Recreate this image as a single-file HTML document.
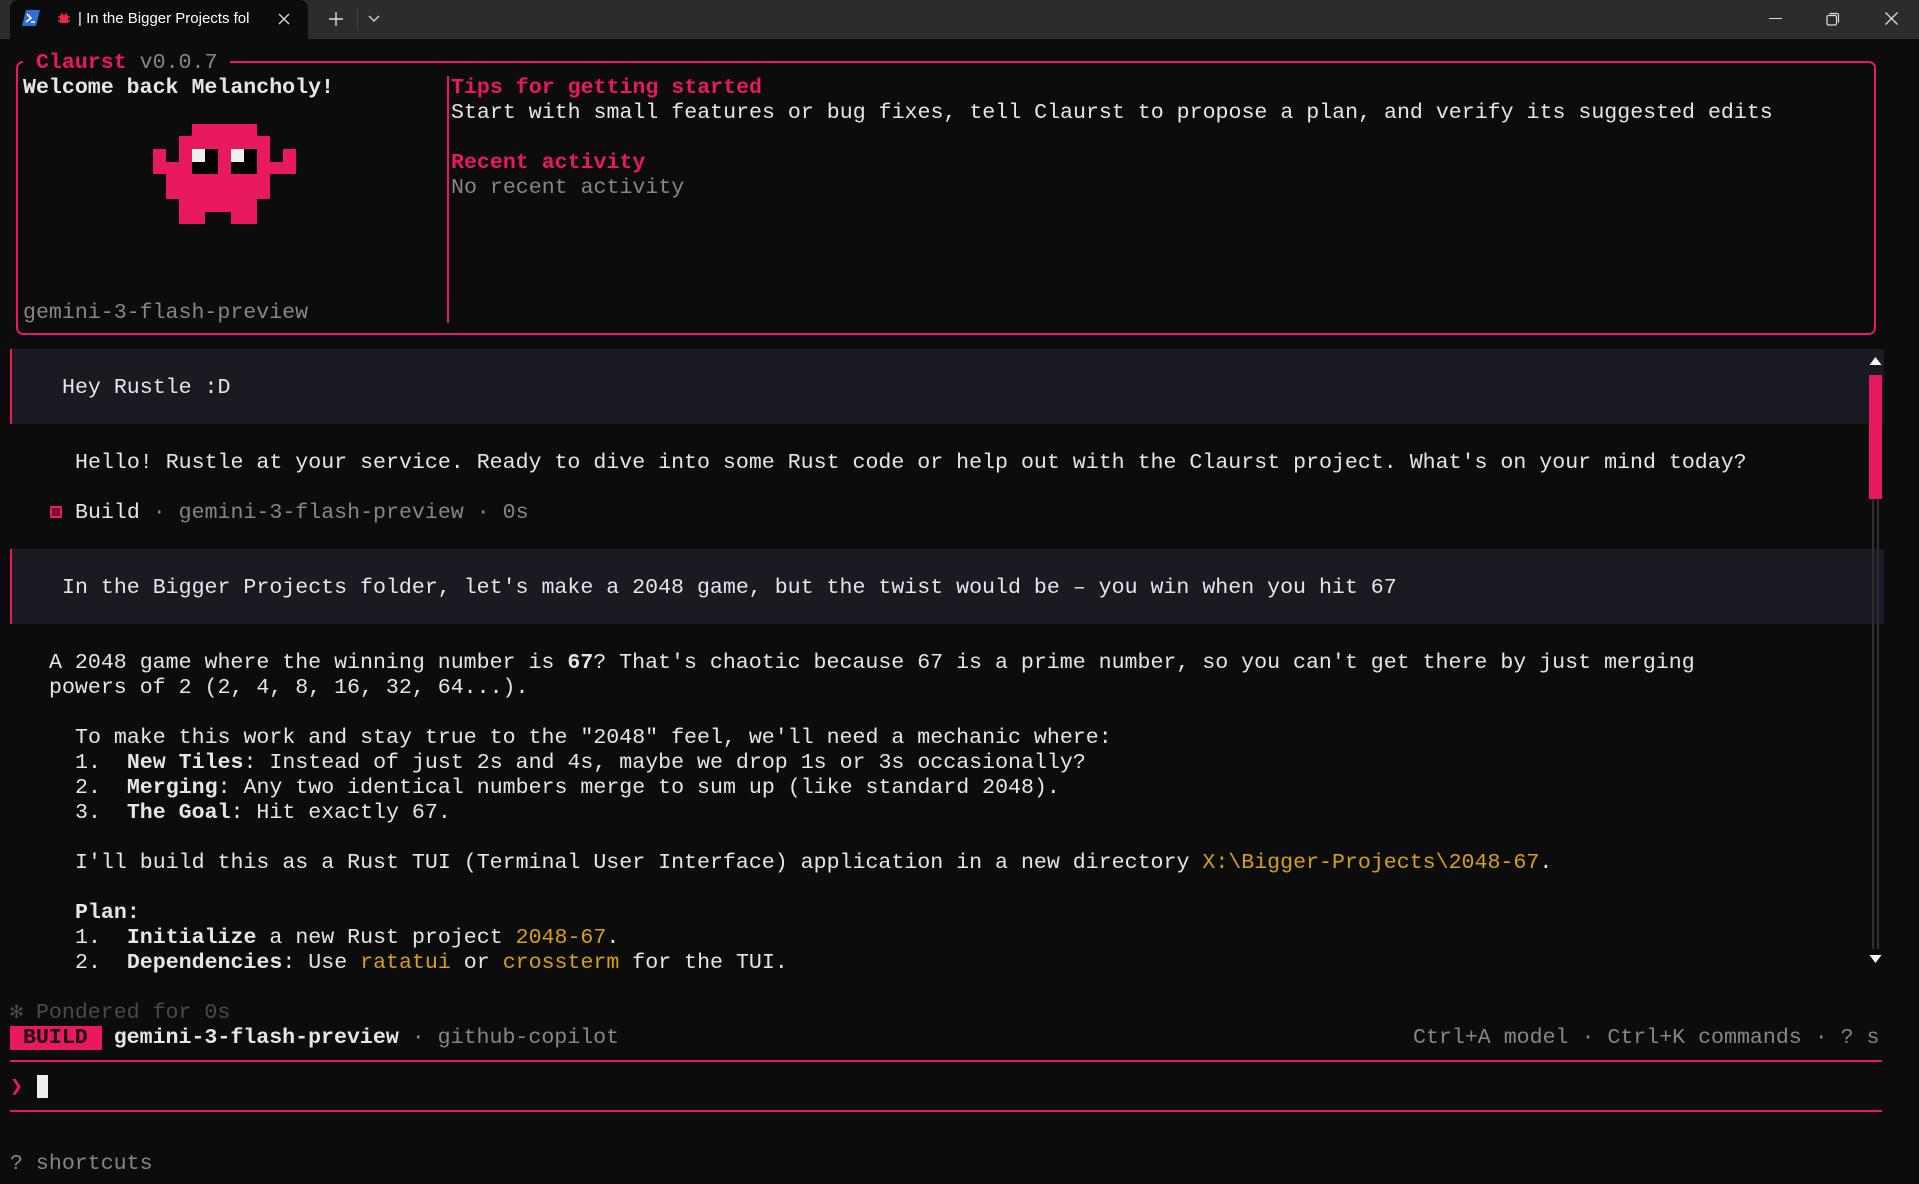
<!DOCTYPE html>
<html><head><meta charset="utf-8">
<style>
html,body{margin:0;padding:0;background:#0c0c0c;width:1919px;height:1184px;overflow:hidden;position:relative}
.l{position:absolute;font-family:"Liberation Mono",monospace;font-size:21.6px;line-height:25px;height:25px;white-space:pre;color:#e6e6e6;margin-top:2px}
.p{color:#e8195f}.g{color:#85858c}.d{color:#4a4a4e}.y{color:#d4a20e}b{font-weight:bold}
.abs{position:absolute}
</style></head><body>
<!-- tab bar -->
<div class="abs" style="left:0;top:0;width:1919px;height:39px;background:#2c2c2c"></div>
<div class="abs" style="left:10px;top:0;width:298px;height:39px;background:#0c0c0c;border-radius:8px 8px 0 0"></div>
<svg class="abs" style="left:22px;top:10px" width="18" height="16" viewBox="0 0 18 16"><path d="M4 0H18L14 16H0Z" fill="#2f6fd6"/><path d="M5 4L9 8L4 12M9 12H13" stroke="#fff" stroke-width="1.6" fill="none"/></svg>
<svg class="abs" style="left:57px;top:12px" width="14" height="14" viewBox="0 0 14 14"><rect x="3" y="3" width="8" height="8" fill="#e8263a"/><path d="M1 5H3M1 9H3M11 5H13M11 9H13M5 1V3M9 1V3" stroke="#e8263a" stroke-width="1.5"/></svg>
<div class="abs" style="left:78px;top:10px;font:15px 'Liberation Sans',sans-serif;color:#fff">| In the Bigger Projects fol</div>
<svg class="abs" style="left:278px;top:13px" width="12" height="12"><path d="M1 1L11 11M11 1L1 11" stroke="#ddd" stroke-width="1.3"/></svg>
<svg class="abs" style="left:329px;top:12px" width="14" height="14"><path d="M7 0V14M0 7H14" stroke="#ddd" stroke-width="1.4"/></svg>
<div class="abs" style="left:357px;top:8px;width:1px;height:22px;background:#444"></div>
<svg class="abs" style="left:368px;top:15px" width="12" height="8"><path d="M1 1L6 6L11 1" stroke="#ddd" stroke-width="1.3" fill="none"/></svg>
<div class="abs" style="left:1769px;top:18px;width:13px;height:1px;background:#ddd"></div>
<svg class="abs" style="left:1826px;top:12px" width="14" height="14"><rect x="1" y="3.5" width="9.5" height="9.5" rx="1.5" stroke="#ddd" fill="none" stroke-width="1.2"/><path d="M3.5 1.5H11A1.5 1.5 0 0 1 12.5 3V10.5" stroke="#ddd" fill="none" stroke-width="1.2"/></svg>
<svg class="abs" style="left:1885px;top:12px" width="13" height="13"><path d="M0.5 0.5L12.5 12.5M12.5 0.5L0.5 12.5" stroke="#ddd" stroke-width="1.3"/></svg>

<!-- header box -->
<div class="abs" style="left:16px;top:61px;width:1856px;height:270px;border:2px solid #e8195f;border-radius:7px"></div>
<div class="abs" style="left:447px;top:76px;width:2px;height:247px;background:#e8195f"></div>
<div class="l" style="left:23px;top:49px;background:#0c0c0c"> <b class="p">Claurst</b><span class="g"> v0.0.7 </span></div>
<div class="l" style="left:23px;top:74px"><b>Welcome back Melancholy!</b></div>
<div class="l" style="left:451px;top:74px"><b class="p">Tips for getting started</b></div>
<div class="l" style="left:451px;top:99px">Start with small features or bug fixes, tell Claurst to propose a plan, and verify its suggested edits</div>
<div class="l" style="left:451px;top:149px"><b class="p">Recent activity</b></div>
<div class="l g" style="left:451px;top:174px">No recent activity</div>
<div class="l g" style="left:23px;top:299px">gemini-3-flash-preview</div>
<!-- mascot -->
<svg class="abs" style="left:0;top:0" width="320" height="240">
<g fill="#e8195f">
<rect x="192" y="124" width="65" height="13"/>
<rect x="179" y="136" width="91" height="63"/>
<rect x="166" y="174" width="13" height="25"/>
<rect x="153" y="149" width="13" height="25"/><rect x="166" y="162" width="13" height="12"/>
<rect x="283" y="149" width="13" height="25"/><rect x="270" y="162" width="13" height="12"/>
<rect x="179" y="198" width="26" height="26"/><rect x="231" y="198" width="26" height="26"/><rect x="205" y="198" width="26" height="14"/>
</g>
<rect x="192" y="149" width="26" height="25" fill="#000"/><rect x="231" y="149" width="26" height="25" fill="#000"/>
<rect x="192" y="149" width="13" height="13" fill="#eee"/><rect x="231" y="149" width="13" height="13" fill="#eee"/>
</svg>

<!-- messages -->
<div class="abs" style="left:10px;top:349px;width:1872px;height:75px;background:#1a1b22;border-left:2px solid #e8195f"></div>
<div class="l" style="left:62px;top:374px">Hey Rustle :D</div>
<div class="l" style="left:75px;top:449px">Hello! Rustle at your service. Ready to dive into some Rust code or help out with the Claurst project. What's on your mind today?</div>
<div class="abs" style="left:50px;top:506px;width:8px;height:8px;border:2px solid #e8195f;background:#7a1033"></div>
<div class="l" style="left:75px;top:499px">Build<span class="g"> · gemini-3-flash-preview · 0s</span></div>
<div class="abs" style="left:10px;top:549px;width:1872px;height:75px;background:#1a1b22;border-left:2px solid #e8195f"></div>
<div class="l" style="left:62px;top:574px">In the Bigger Projects folder, let's make a 2048 game, but the twist would be – you win when you hit 67</div>
<div class="l" style="left:49px;top:649px">A 2048 game where the winning number is <b>67</b>? That's chaotic because 67 is a prime number, so you can't get there by just merging</div>
<div class="l" style="left:49px;top:674px">powers of 2 (2, 4, 8, 16, 32, 64...).</div>
<div class="l" style="left:75px;top:724px">To make this work and stay true to the "2048" feel, we'll need a mechanic where:</div>
<div class="l" style="left:75px;top:749px">1.  <b>New Tiles</b>: Instead of just 2s and 4s, maybe we drop 1s or 3s occasionally?</div>
<div class="l" style="left:75px;top:774px">2.  <b>Merging</b>: Any two identical numbers merge to sum up (like standard 2048).</div>
<div class="l" style="left:75px;top:799px">3.  <b>The Goal</b>: Hit exactly 67.</div>
<div class="l" style="left:75px;top:849px">I'll build this as a Rust TUI (Terminal User Interface) application in a new directory <span class="y">X:\Bigger-Projects\2048-67</span>.</div>
<div class="l" style="left:75px;top:899px"><b>Plan:</b></div>
<div class="l" style="left:75px;top:924px">1.  <b>Initialize</b> a new Rust project <span class="y">2048-67</span>.</div>
<div class="l" style="left:75px;top:949px">2.  <b>Dependencies</b>: Use <span class="y">ratatui</span> or <span class="y">crossterm</span> for the TUI.</div>

<!-- scrollbar -->
<svg class="abs" style="left:1868px;top:356px" width="15" height="10"><path d="M1.5 9L7.5 1L13.5 9Z" fill="#fff"/></svg>
<div class="abs" style="left:1869px;top:375px;width:13px;height:124px;background:#e8195f"></div>
<div class="abs" style="left:1872px;top:499px;width:2px;height:450px;background:#2e2e36"></div>
<div class="abs" style="left:1877px;top:499px;width:2px;height:450px;background:#2e2e36"></div>
<svg class="abs" style="left:1868px;top:954px" width="15" height="10"><path d="M1.5 1L7.5 9L13.5 1Z" fill="#fff"/></svg>

<!-- footer -->
<div class="l d" style="left:10px;top:999px">✻ Pondered for 0s</div>
<div class="abs" style="left:10px;top:1026px;width:92px;height:24px;background:#e8195f"></div>
<div class="l" style="left:10px;top:1024px"><b style="color:#1a0a10"> BUILD </b> <b>gemini-3-flash-preview</b><span class="g"> · github-copilot</span></div>
<div class="l g" style="left:1413px;top:1024px">Ctrl+A model · Ctrl+K commands · ? s</div>
<div class="abs" style="left:10px;top:1060px;width:1872px;height:2px;background:#e8195f"></div>
<div class="l p" style="left:10px;top:1074px"><b>❯</b></div>
<div class="abs" style="left:37px;top:1075px;width:11px;height:23px;background:#eee"></div>
<div class="abs" style="left:10px;top:1110px;width:1872px;height:2px;background:#e8195f"></div>
<div class="l g" style="left:10px;top:1150px">? shortcuts</div>
</body></html>
